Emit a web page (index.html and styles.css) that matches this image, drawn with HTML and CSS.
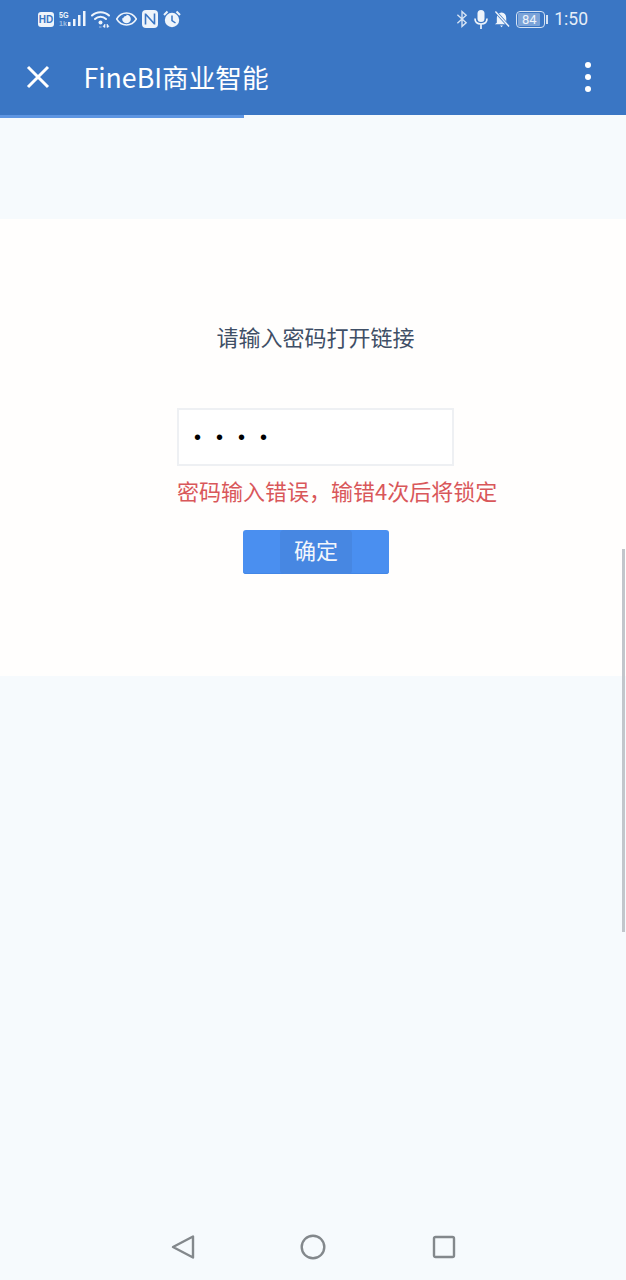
FILE: index.html
```html
<!DOCTYPE html>
<html lang="zh-CN">
<head>
    <meta charset="UTF-8">
    <meta name="viewport" content="width=device-width, initial-scale=1.0">
    <title>FineBI商业智能</title>
    <link rel="stylesheet" href="styles.css">
</head>
<body>
    <div class="phone">
        <header class="app-header">
            <!-- Status bar -->
            <div class="status-bar">
                <div class="status-left">
                    <span class="hd-badge">HD</span>
                    <span class="signal">
                        <span class="signal-text"><b>5G</b><i>1k</i></span>
                        <svg width="18" height="18" viewBox="0 0 18 18"><g fill="#eef4fb"><rect x="0" y="12" width="2.500" height="4"/><rect x="5" y="9" width="2.500" height="7"/><rect x="10" y="5" width="2.500" height="11"/><rect x="15" y="1" width="2.500" height="15"/></g></svg>
                    </span>
                    <svg class="icon-wifi" width="20" height="18" viewBox="0 0 20 18"><g fill="none" stroke="#eef4fb" stroke-width="2" stroke-linecap="round"><path d="M1 5.500C5.500 1 13.500 1 18 5.500"/><path d="M4 9C7 6 12 6 15 9"/></g><circle cx="9.500" cy="12.500" r="2" fill="#eef4fb"/><path d="M8 17h2.500M14 14l-2 2.500 2 1zM16 14l2 2.500-2 1z" fill="#eef4fb" stroke="#eef4fb" stroke-width=".6"/></svg>
                    <svg width="21" height="14" viewBox="0 0 21 14"><path d="M.6 7C3 3 6.400 1 10.500 1S18 3 20.400 7C18 11 14.600 13 10.500 13S3 11 .6 7Z" fill="none" stroke="#eef4fb" stroke-width="1.600"/><circle cx="10.500" cy="7" r="4.300" fill="#eef4fb"/><path d="M6.400 6.200A4.200 4.200 0 0 1 10.500 3" fill="none" stroke="#3a76c4" stroke-width="1.400"/></svg>
                    <svg width="16" height="18" viewBox="0 0 16 18"><rect x="0" y="0" width="16" height="18" rx="4" fill="#eef4fb"/><path d="M3.500 3.500v11M3.500 4 12.500 14M12.500 3.500v11" fill="none" stroke="#3a76c4" stroke-width="1.600"/></svg>
                    <svg width="18" height="18" viewBox="0 0 18 18"><circle cx="9" cy="10" r="7.200" fill="#eef4fb"/><path d="M9 5.500V10.500L12.500 13" fill="none" stroke="#3a76c4" stroke-width="1.500"/><path d="M1 5 4.500 1.500M17 5 13.500 1.500" stroke="#eef4fb" stroke-width="2" fill="none"/></svg>
                </div>
                <div class="status-right">
                    <svg width="12" height="18" viewBox="0 0 13 18"><path d="M1.500 4.500 11 13l-4.500 4V1L11 5 1.500 13.500" fill="none" stroke="#d5e3f4" stroke-width="1.500"/></svg>
                    <svg width="14" height="19" viewBox="0 0 14 19"><rect x="3.500" y="0" width="7" height="12" rx="3.500" fill="#eef4fb"/><path d="M1 8.500C1 12 3.500 14 7 14s6-2 6-5.500M7 14v5" fill="none" stroke="#eef4fb" stroke-width="1.700"/></svg>
                    <svg width="16" height="18" viewBox="0 0 17 18"><path d="M3 13V8C3 4.500 5 2.500 8 2.200 11 2.500 13 4.500 13 8v5l2 1.500H1Z" fill="#eef4fb"/><path d="M6.500 16h3l-1.500 1.800Z" fill="#eef4fb"/><path d="M1.500 1 16 17" stroke="#3a76c4" stroke-width="3"/><path d="M1.500 1 16 17" stroke="#eef4fb" stroke-width="1.500"/></svg>
                    <span class="battery">
                        <span class="battery-body"><span class="battery-fill">84</span></span>
                        <span class="battery-tip"></span>
                    </span>
                    <span class="clock">1:50</span>
                </div>
            </div>
            <!-- Toolbar -->
            <div class="toolbar">
                <svg class="close-icon" width="24" height="24" viewBox="0 0 24 24"><path d="M2 2 22 22M22 2 2 22" fill="none" stroke="#fff" stroke-width="3"/></svg>
                <h1 class="toolbar-title">FineBI商业智能</h1>
                <div class="more-icon"><span></span><span></span><span></span></div>
            </div>
        </header>
        <div class="progress"></div>

        <!-- Password form -->
        <main class="card">
            <p class="prompt">请输入密码打开链接</p>
            <form class="password-form">
                <input class="password-input" type="password" value="1234">
                <div class="error-message">密码输入错误，输错4次后将锁定</div>
                <button class="confirm-btn" type="button"><span>确定</span></button>
            </form>
        </main>

        <!-- Navigation bar -->
        <nav class="nav-bar">
            <svg width="24" height="26" viewBox="0 0 24 26"><path d="M22 2.500V23.500L2 13Z" fill="none" stroke="#83888c" stroke-width="2.400" stroke-linejoin="round"/></svg>
            <svg width="26" height="26" viewBox="0 0 26 26"><circle cx="13" cy="13" r="11.300" fill="none" stroke="#83888c" stroke-width="2.400"/></svg>
            <svg width="24" height="24" viewBox="0 0 24 24"><rect x="2" y="2" width="20" height="20" rx="1.500" fill="none" stroke="#83888c" stroke-width="2.400"/></svg>
        </nav>

        <div class="scrollbar"></div>
    </div>
</body>
</html>
```

FILE: styles.css
```css
body {
    margin: 0;
    font-family: "Noto Sans CJK SC", "Noto Sans", sans-serif;
    background-color: #f6fafd;
}
.phone {
    position: relative;
    display: flex;
    flex-direction: column;
    height: 1280px;
    overflow: hidden;
}
.app-header {
    height: 115px;
    background-color: #3a76c4;
    color: #fff;
}
.status-bar {
    display: flex;
    justify-content: space-between;
    align-items: center;
    height: 38px;
    padding: 0 38px;
}
.status-left,
.status-right {
    display: flex;
    align-items: center;
}
.status-left {
    gap: 5px;
}
.status-right {
    gap: 6px;
}
.hd-badge {
    width: 16px;
    height: 15px;
    border-radius: 3px;
    background-color: #eef4fb;
    color: #3a76c4;
    font: bold 10px/15px "Liberation Sans", sans-serif;
    text-align: center;
}
.signal {
    display: flex;
    align-items: flex-end;
}
.signal-text {
    display: flex;
    flex-direction: column;
    width: 11px;
    font: bold 9px/9px "Liberation Sans", sans-serif;
    color: #eef4fb;
}
.signal-text b {
    transform: scaleX(.8);
    transform-origin: left;
}
.signal-text i {
    font-style: normal;
    font-size: 7px;
    line-height: 8px;
    color: #9dbde3;
}
.signal svg {
    margin-left: -2px;
}
.battery {
    display: flex;
    align-items: center;
    gap: 1px;
}
.battery-body {
    box-sizing: border-box;
    width: 29px;
    height: 17px;
    padding: 1px;
    border: 1px solid #d5e3f4;
    border-radius: 4px;
}
.battery-fill {
    display: block;
    width: 22px;
    height: 13px;
    border-radius: 1px;
    background-color: #7ba3d8;
    color: #eef4fb;
    font: 13px/13px "Roboto", sans-serif;
    text-align: center;
}
.battery-tip {
    width: 2px;
    height: 9px;
    background-color: #d5e3f4;
}
.clock {
    font: 17.500px/20px "Roboto", sans-serif;
    color: #e6eef8;
}
.toolbar {
    display: flex;
    align-items: center;
    height: 77px;
    padding: 0 26px;
}
.close-icon {
    flex: none;
}
.toolbar-title {
    flex: 1;
    margin: 0 0 0 33.500px;
    font-size: 26.700px;
    font-weight: 400;
    line-height: 34px;
}
.more-icon {
    display: flex;
    flex-direction: column;
    gap: 6px;
    margin-right: 9px;
}
.more-icon span {
    width: 6px;
    height: 6px;
    border-radius: 50%;
    background-color: #fff;
}
.progress {
    width: 244px;
    height: 3px;
    background-color: #5d95e2;
}
.card {
    display: flex;
    flex-direction: column;
    align-items: center;
    height: 457px;
    margin-top: 101px;
    padding-left: 5px;
    background-color: #fffefd;
}
.prompt {
    margin: 100px 0 0;
    font-size: 22px;
    line-height: 34px;
    color: #3f4f66;
}
.password-form {
    width: 277px;
    margin-top: 55px;
}
.password-input {
    display: block;
    box-sizing: border-box;
    width: 100%;
    height: 58px;
    padding: 0 15px;
    border: 2px solid #eef0f3;
    background-color: #fff;
    font-family: "Liberation Sans", sans-serif;
    font-size: 20px;
    letter-spacing: 15px;
    color: #000;
    outline: none;
}
.error-message {
    margin-top: 7px;
    font-size: 22px;
    line-height: 34px;
    white-space: nowrap;
    color: #d9575a;
}
.confirm-btn {
    display: flex;
    justify-content: center;
    align-items: center;
    width: 146px;
    height: 44px;
    margin: 23px 0 0 66px;
    padding: 0;
    border: none;
    border-radius: 3px;
    background-color: #4a8ff0;
    box-shadow: inset 0 -1px 0 #4387e6;
    cursor: pointer;
}
.confirm-btn span {
    width: 72px;
    height: 44px;
    border-radius: 4px;
    background-color: #4787e2;
    color: #f2f6fc;
    font-size: 22px;
    line-height: 44px;
}
.nav-bar {
    display: flex;
    justify-content: space-between;
    align-items: center;
    width: 285px;
    margin: auto auto 20px;
}
.scrollbar {
    position: absolute;
    top: 549px;
    right: 1px;
    width: 3px;
    height: 383px;
    background-color: #c2c6cb;
}
```
